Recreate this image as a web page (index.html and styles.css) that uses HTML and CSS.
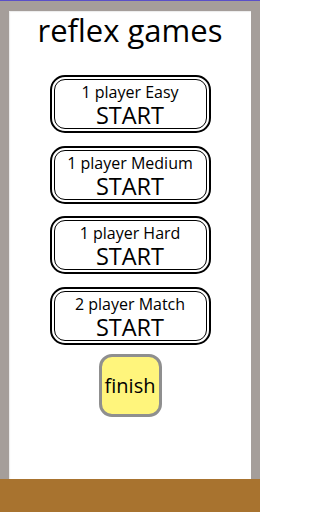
FILE: index.html
```html
<!DOCTYPE html>
<html>
<head>
<meta charset="utf-8">
<link rel="stylesheet" href="styles.css">
</head>
<body>
<div class="page">
  <div class="frame">
    <div class="paper">
      <h1 class="title">reflex games</h1>
      <div class="menu">
        <button class="start"><span class="mode">1 player Easy</span><span class="go">START</span></button>
        <button class="start"><span class="mode">1 player Medium</span><span class="go">START</span></button>
        <button class="start"><span class="mode">1 player Hard</span><span class="go">START</span></button>
        <button class="start"><span class="mode">2 player Match</span><span class="go">START</span></button>
        <button class="finish">finish</button>
      </div>
    </div>
  </div>
  <div class="ground"></div>
</div>
</body>
</html>
```
FILE: styles.css
```css
html, body {
  margin: 0;
  padding: 0;
  background: #fff;
}
body {
  width: 260px;
  height: 512px;
  overflow: hidden;
  font-family: "Open Sans", "Noto Sans", sans-serif;
}
.page {
  display: flex;
  flex-direction: column;
  width: 260px;
  height: 512px;
  border-top: 1px solid #5a50c8;
  box-sizing: border-box;
  background: #a59e9a;
}
.frame {
  flex: 1;
  display: flex;
  padding: 10px 9px 0 9px;
  background: #a59e9a;
}
.paper {
  flex: 1;
  background: #fff;
  display: flex;
  flex-direction: column;
  align-items: center;
  box-shadow: inset 1px 1px 1px rgba(0, 0, 0, 0.08);
}
.title {
  margin: 0;
  font-weight: normal;
  font-size: 31px;
  line-height: 38px;
  color: #000;
}
.menu {
  margin-top: 26px;
  display: flex;
  flex-direction: column;
  align-items: center;
  gap: 12.5px;
}
.start {
  width: 161px;
  height: 58px;
  box-sizing: border-box;
  border: 2px solid #000;
  border-radius: 15px;
  background: #fff;
  padding: 6px 0 0 0;
  position: relative;
  display: flex;
  flex-direction: column;
  align-items: center;
  justify-content: flex-start;
  gap: 1px;
  font-family: inherit;
  color: #000;
}
.start::before {
  content: "";
  position: absolute;
  inset: 2px;
  border: 1.5px solid #000;
  border-radius: 11px;
}
.mode {
  font-size: 16px;
  line-height: 19px;
}
.go {
  font-size: 23.5px;
  line-height: 25px;
}
.finish {
  margin-top: -3px;
  width: 63px;
  height: 63px;
  box-sizing: border-box;
  border: 3px solid #8f8f8f;
  border-radius: 13px;
  background: #fff57c;
  font-family: inherit;
  font-size: 20px;
  color: #000;
  padding: 0;
}
.ground {
  height: 33px;
  background: #a8732f;
}
```
